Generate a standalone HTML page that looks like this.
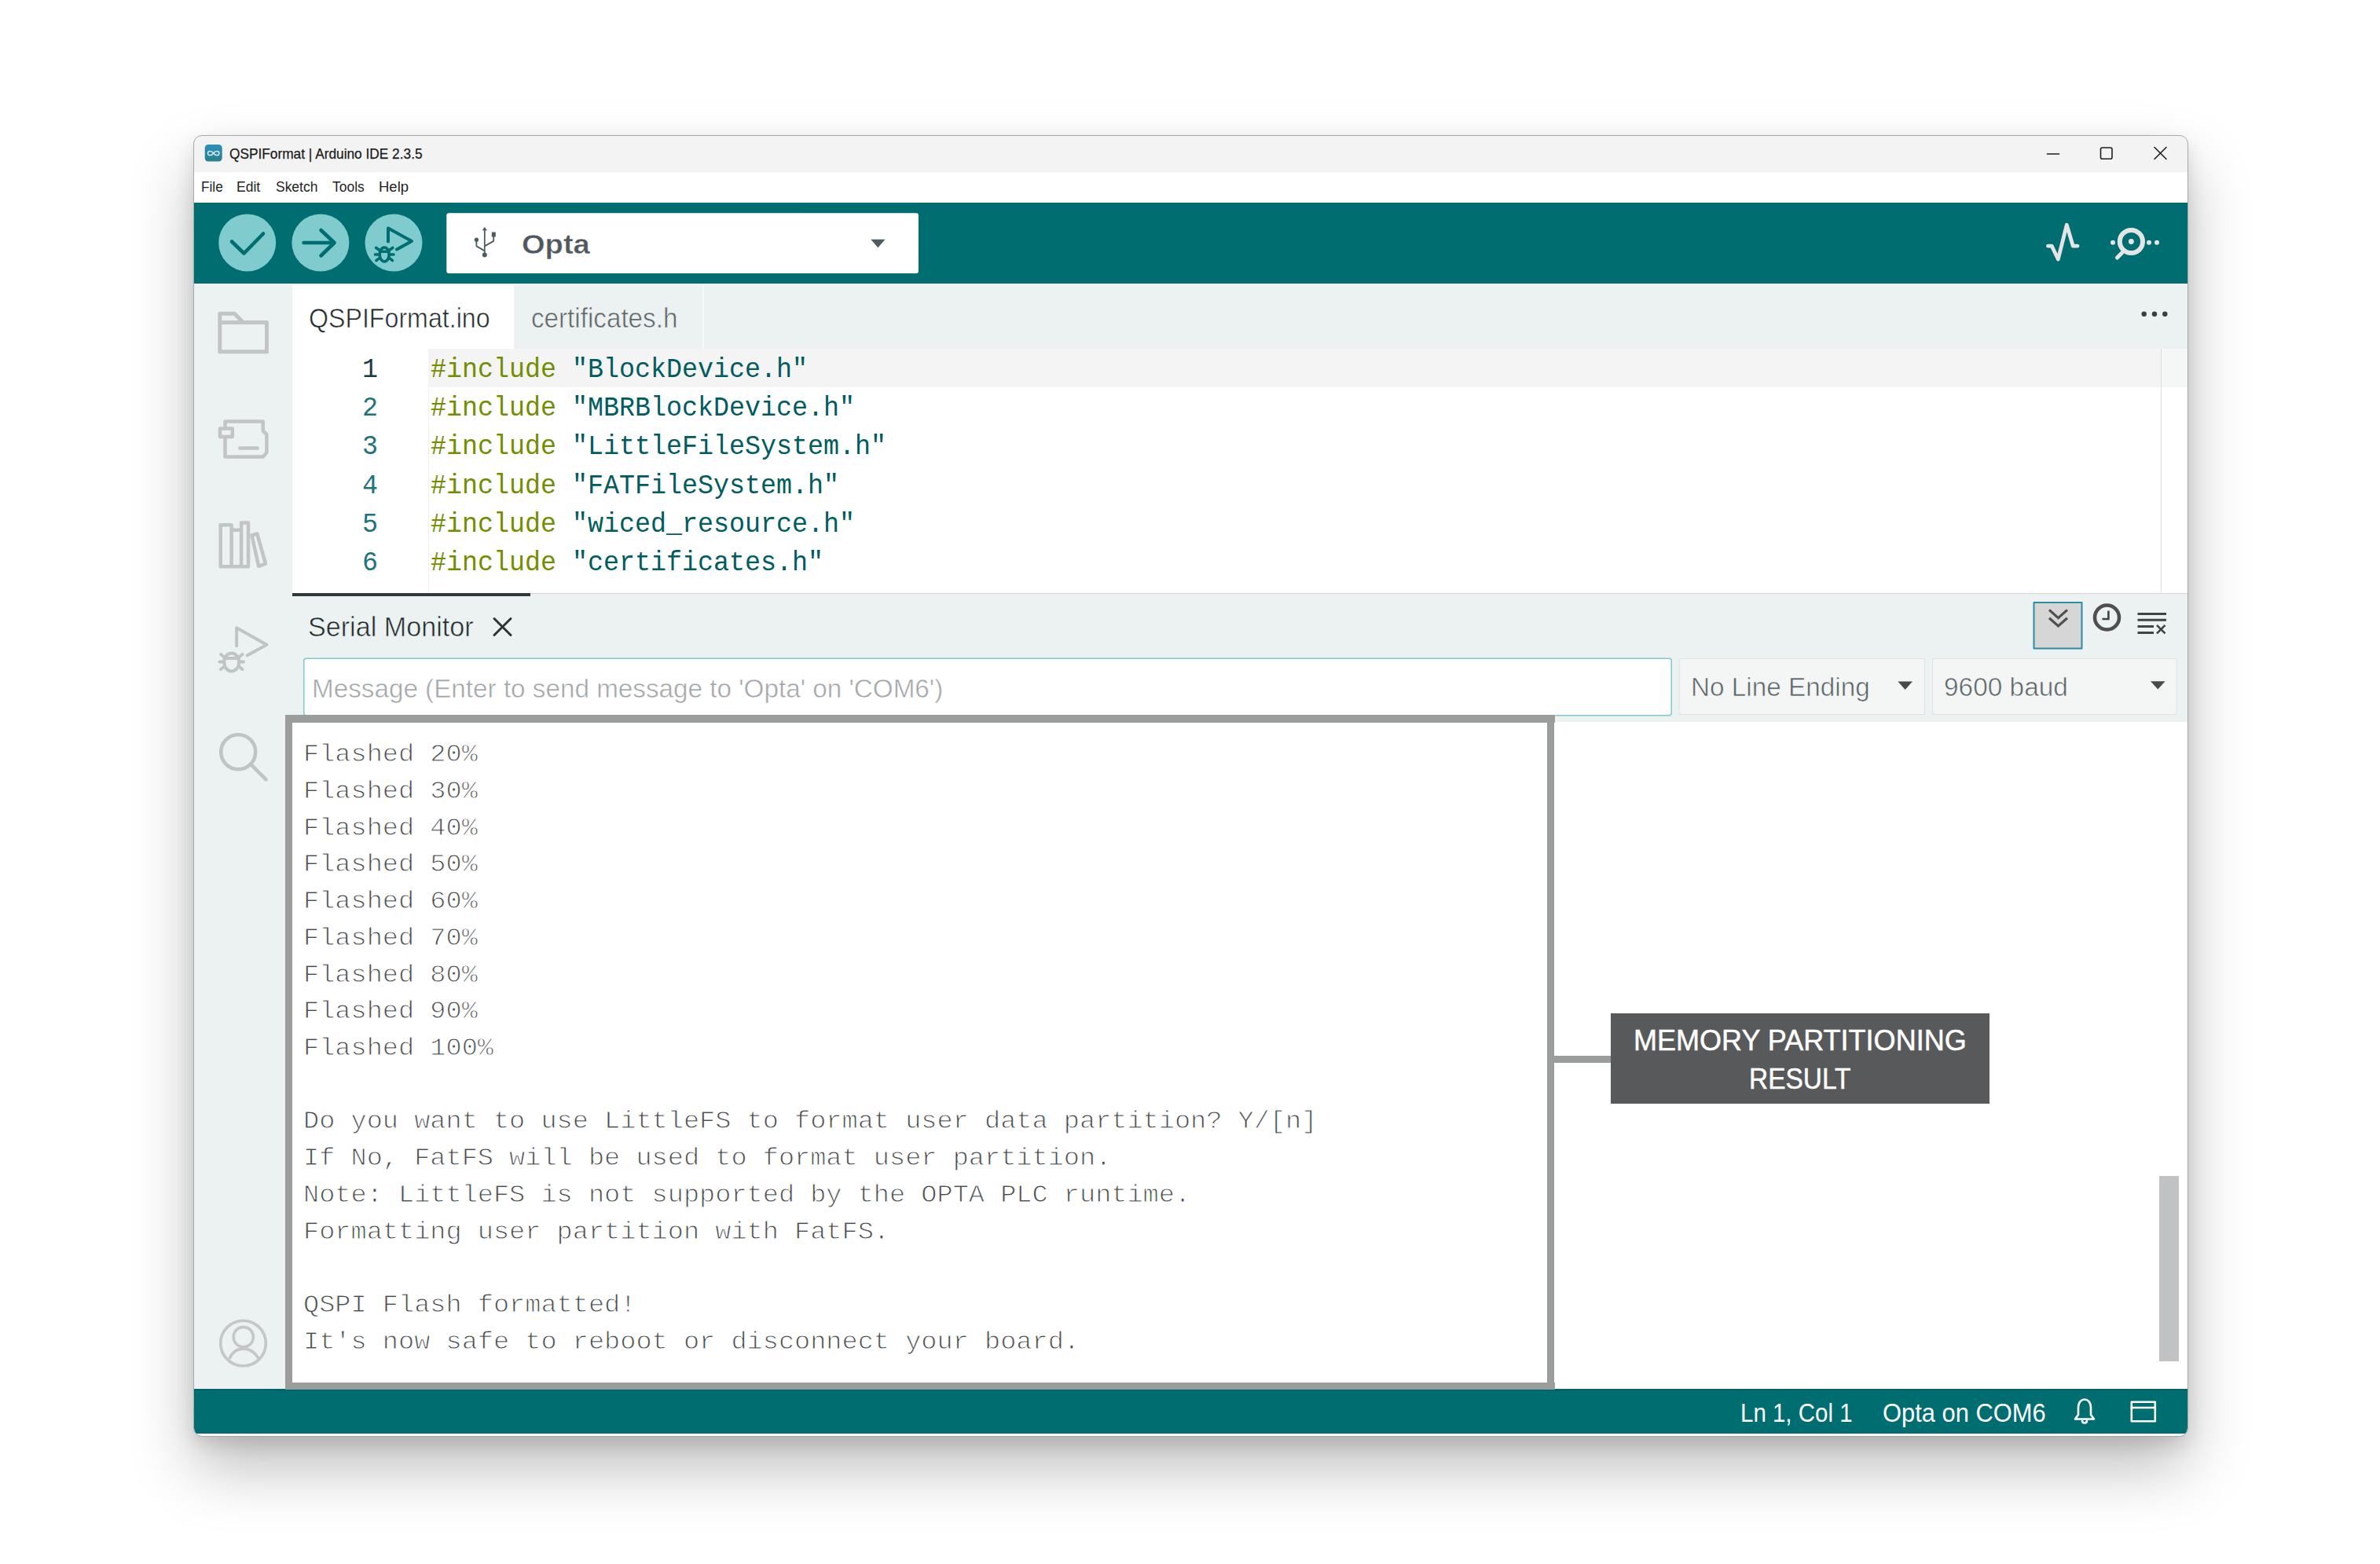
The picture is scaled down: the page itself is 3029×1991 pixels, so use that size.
<!DOCTYPE html>
<html><head><meta charset="utf-8">
<style>
html,body{margin:0;padding:0;}
body{width:3029px;height:1991px;background:#fff;position:relative;overflow:hidden;font-family:"Liberation Sans",sans-serif;}
.a{position:absolute;}
.t{position:absolute;white-space:pre;transform-origin:0 0;}
.mono{font-family:"Liberation Mono",monospace;}
#shadow{position:absolute;left:247px;top:173px;width:2537px;height:1655px;border-radius:10px;box-shadow:0 40px 80px rgba(0,0,0,0.26),0 10px 24px rgba(0,0,0,0.12);}
#win{position:absolute;left:247px;top:173px;width:2537px;height:1655px;border-radius:10px;overflow:hidden;background:#fff;}
#in{position:absolute;left:-247px;top:-173px;width:3029px;height:1991px;}
#frame{position:absolute;left:246px;top:172px;width:2537px;height:1655px;border:1px solid #a9a9a9;border-radius:11px;}
#ic{position:absolute;left:0;top:0;width:3029px;height:1991px;}
</style></head>
<body>
<div id="shadow"></div>
<div id="win"><div id="in">
<div class="a" style="left:247.00px;top:173.00px;width:2537.00px;height:46.00px;background:#f3f3f3;"></div>
<div class="a" style="left:247.00px;top:219.00px;width:2537.00px;height:39.00px;background:#ffffff;"></div>
<div class="a" style="left:247.00px;top:258.00px;width:2537.00px;height:103.00px;background:#006d70;"></div>
<div class="a" style="left:247.00px;top:361.00px;width:2537.00px;height:2.00px;background:#ffffff;"></div>
<div class="a" style="left:247.00px;top:363.00px;width:125.00px;height:1405.00px;background:#ecf1f1;"></div>
<div class="a" style="left:372.00px;top:363.00px;width:2412.00px;height:81.00px;background:#ecf1f1;"></div>
<div class="a" style="left:372.00px;top:363.00px;width:282.00px;height:81.00px;background:#ffffff;"></div>
<div class="a" style="left:894.00px;top:363.00px;width:1.50px;height:81.00px;background:#f6f7f7;"></div>
<div class="a" style="left:372.00px;top:444.00px;width:2412.00px;height:311.00px;background:#ffffff;"></div>
<div class="a" style="left:545.00px;top:444.00px;width:2205.00px;height:49.00px;background:#f4f4f4;"></div>
<div class="a" style="left:545.00px;top:493.00px;width:1.00px;height:262.00px;background:#f0f0f0;"></div>
<div class="a" style="left:2750.00px;top:444.00px;width:1.00px;height:311.00px;background:#d9dcdc;"></div>
<div class="a" style="left:2751.00px;top:444.00px;width:33.00px;height:49.00px;background:#f5f6f6;"></div>
<div class="a" style="left:372.00px;top:755.00px;width:2412.00px;height:164.00px;background:#ecf1f1;"></div>
<div class="a" style="left:372.00px;top:755.00px;width:2412.00px;height:1.00px;background:#d3d6d6;"></div>
<div class="a" style="left:372.00px;top:755.00px;width:303.00px;height:4.00px;background:#2c3a3d;"></div>
<div class="a" style="left:372.00px;top:919.00px;width:2412.00px;height:849.00px;background:#ffffff;"></div>
<div class="a" style="left:247.00px;top:1768.00px;width:2537.00px;height:57.00px;background:#006d70;"></div>
<div class="a" style="left:247.00px;top:1825.00px;width:2537.00px;height:3.00px;background:#ffffff;"></div>
<svg id="ic" viewBox="0 0 3029 1991" fill="none" stroke-linecap="round" stroke-linejoin="round">
<!-- title icon -->
<defs><linearGradient id="lg" x1="0" y1="0" x2="0" y2="1"><stop offset="0" stop-color="#2d90bd"/><stop offset="1" stop-color="#297f89"/></linearGradient></defs>
<rect x="260.7" y="184" width="22" height="21.6" rx="4.5" fill="url(#lg)"/>
<path d="M271.7,195 C269.5,191.5 264.5,191.5 264.5,195 C264.5,198.5 269.5,198.5 271.7,195 C273.9,191.5 278.9,191.5 278.9,195 C278.9,198.5 273.9,198.5 271.7,195 Z" stroke="#cde8ee" stroke-width="1.5"/>
<!-- window buttons -->
<path d="M2605.5,196 H2620.5" stroke="#1f1f1f" stroke-width="1.6"/>
<rect x="2673.5" y="188" width="14.5" height="14.2" rx="2" stroke="#1f1f1f" stroke-width="1.6"/>
<path d="M2742,187.5 L2757,202.5 M2757,187.5 L2742,202.5" stroke="#1f1f1f" stroke-width="1.6"/>
<!-- toolbar buttons -->
<circle cx="314.7" cy="309" r="36.5" fill="#7fcbcd"/>
<circle cx="407.9" cy="309" r="36.5" fill="#7fcbcd"/>
<circle cx="501" cy="309" r="36.5" fill="#7fcbcd"/>
<path d="M295,307.5 L310.5,322.5 L335,297.5" stroke="#006d70" stroke-width="4.6"/>
<path d="M386.5,309 H425.5 M408.5,293 L425.5,309 L408.5,325.5" stroke="#006d70" stroke-width="4.6"/>
<path d="M494,307.5 V290.5 L524,307 L505,317.5" stroke="#006d70" stroke-width="4"/>
<g stroke="#006d70" stroke-width="3.6">
<ellipse cx="489.2" cy="324" rx="6" ry="9"/>
<path d="M483.5,320.2 H494.9 M478.6,315.5 L483.4,318.8 M499.8,315.5 L495,318.8 M477.5,324 H483 M501,324 H495.4 M478.9,331.6 L483.2,328.4 M499.5,331.6 L495.2,328.4"/>
</g>
<!-- board selector -->
<rect x="568.3" y="271.2" width="600.7" height="76.8" rx="3" fill="#ffffff"/>
<g stroke="#4e5b61" stroke-width="1.8" fill="none">
<path d="M616.8,292 V324.6 M616.8,319.4 L606.4,313.4 V305.6 M616.8,313.4 L628.2,306.9 V301"/>
</g>
<path d="M613.6,293.2 L616.8,289 L620,293.2 Z" fill="#4e5b61"/>
<circle cx="606.4" cy="305.2" r="2.6" fill="#4e5b61"/>
<rect x="625.8" y="295.5" width="5" height="6" fill="#4e5b61"/>
<circle cx="616.8" cy="324.6" r="3" fill="#4e5b61"/>
<path d="M1108.3,304.8 H1126.5 L1117.4,315.2 Z" fill="#4e5b61"/>
<!-- right toolbar icons -->
<path d="M2606.5,313.2 H2611.3 L2619.3,330 L2630.3,286.3 L2638.3,313.2 H2644" stroke="#e4e6e6" stroke-width="4.8"/>
<circle cx="2712.4" cy="307.5" r="14.6" stroke="#e4e6e6" stroke-width="6"/>
<circle cx="2712.4" cy="307.5" r="3.4" fill="#e4e6e6"/>
<path d="M2700.5,322 L2694.5,328" stroke="#e4e6e6" stroke-width="5"/>
<circle cx="2689" cy="308.8" r="3" fill="#e4e6e6"/>
<circle cx="2735" cy="308.8" r="3" fill="#e4e6e6"/>
<circle cx="2745" cy="308.8" r="3" fill="#e4e6e6"/>
<!-- sidebar icons -->
<g stroke="#c2c4c5" stroke-width="5" stroke-linejoin="round" stroke-linecap="round">
<path d="M279.8,399.3 H298.5 L309.5,410.5 H339.5 V447.8 H279.8 Z M279.8,410.5 H309.5"/>
</g>
<g stroke="#c2c4c5" stroke-width="4.5" stroke-linejoin="round" stroke-linecap="round">
<path d="M286.5,536.4 H334.7 V548.5 L339.4,553 V576 L335,581.4 H286.5 Z"/>
<rect x="280" y="545.6" width="15.8" height="10.4" fill="#ecf1f1"/>
<path d="M305.3,570.4 H327.6"/>
<path d="M280.7,668.3 H294.6 V721.2 H280.7 Z M294.6,674.7 H307.1 V721.2 H294.6 Z M307.1,665.5 H316 V721.2 H307.1 Z M320.5,681.5 L327.2,679.3 L338,717.6 L329.2,720.8 Z"/>
</g>
<g stroke="#c1c4c5" stroke-width="4" >
<path d="M301.1,822.3 V799.2 L339.5,820.7 L314.7,834.3"/>
<ellipse cx="294.7" cy="843" rx="9.5" ry="11.5"/>
<path d="M285.5,838 H304 M281,833 L286,837 M308.5,833 L303.5,837 M279.5,842.5 H285 M310,842.5 H304.5 M281,852 L286,848 M308.5,852 L303.5,848"/>
</g>
<g stroke="#c1c4c5" stroke-width="4.6">
<circle cx="303.2" cy="957.3" r="22"/>
<path d="M320.3,974.1 L338.5,992.3"/>
</g>
<g stroke="#c4c6c7" stroke-width="3.6">
<circle cx="309.5" cy="1710" r="28.8"/>
<circle cx="309.8" cy="1702" r="12.6"/>
<path d="M292.5,1728.5 C300,1713 319,1713 328.5,1728.5"/>
</g>
<!-- tab dots -->
<circle cx="2728.7" cy="399.8" r="3.2" fill="#3d3d3d"/>
<circle cx="2742" cy="399.8" r="3.2" fill="#3d3d3d"/>
<circle cx="2755.3" cy="399.8" r="3.2" fill="#3d3d3d"/>
<!-- serial monitor close -->
<path d="M629,787.5 L650,808.5 M650,787.5 L629,808.5" stroke="#2b3436" stroke-width="3"/>
<!-- scroll to bottom button -->
<rect x="2588.5" y="767" width="61" height="58.5" fill="#d6d6d6" stroke="#2a8da3" stroke-width="2"/>
<path d="M2608,776.4 L2619.5,786.7 L2631,776.4 M2608,786.7 L2619.5,796.9 L2631,786.7" stroke="#4f4f4f" stroke-width="3.2" stroke-linecap="butt" stroke-linejoin="miter"/>
<!-- clock -->
<circle cx="2681.5" cy="786" r="15.5" stroke="#4f4f4f" stroke-width="4.5"/>
<path d="M2683.4,777.5 V788 H2675.5" stroke="#3d4446" stroke-width="2.6" stroke-linecap="butt" stroke-linejoin="miter"/>
<!-- clear -->
<path d="M2720.5,781.6 H2757 M2720.5,789.2 H2757 M2720.5,797.5 H2741 M2720.5,805.5 H2741" stroke="#3d4446" stroke-width="3" stroke-linecap="butt"/>
<path d="M2745,795.8 L2755.5,806.3 M2755.5,795.8 L2745,806.3" stroke="#3d4446" stroke-width="2.6" stroke-linecap="butt"/>
<!-- inputs -->
<rect x="386.75" y="838.25" width="1740.5" height="72.5" rx="3" fill="#ffffff" stroke="#80c9cc" stroke-width="1.5"/>
<rect x="2137.5" y="838.5" width="312" height="71" fill="#f4f6f6" stroke="#dfe3e3" stroke-width="1"/>
<rect x="2460" y="838.5" width="310" height="71" fill="#f4f6f6" stroke="#dfe3e3" stroke-width="1"/>
<path d="M2415.4,867.6 H2434 L2424.7,877.9 Z" fill="#474b4c"/>
<path d="M2737,867.2 H2755.6 L2746.3,877.5 Z" fill="#474b4c"/>
<!-- status bar icons -->
<g stroke="#ffffff" stroke-width="2.6">
<path d="M2641,1806.5 H2665 L2661,1801 V1792 C2661,1785 2657,1781.5 2653,1781.5 C2649,1781.5 2645,1785 2645,1792 V1801 Z"/>
<path d="M2650,1808.5 C2650,1812.5 2656,1812.5 2656,1808.5"/>
<rect x="2712.8" y="1784.8" width="30" height="24.5"/>
<path d="M2712.8,1792 H2742.8"/>
</g>
</svg>

<div class="t" style="left:292.22px;top:184.90px;font-family:'Liberation Sans',sans-serif;font-weight:400;font-size:18.40px;line-height:21px;color:#1a1a1a;transform:scaleX(0.9396);-webkit-text-stroke:0.25px #1a1a1a;">QSPIFormat | Arduino IDE 2.3.5</div>
<div class="t" style="left:256.22px;top:227.00px;font-family:'Liberation Sans',sans-serif;font-weight:400;font-size:18.90px;line-height:21px;color:#1f1f1f;transform:scaleX(0.9121);">File</div>
<div class="t" style="left:301.40px;top:227.00px;font-family:'Liberation Sans',sans-serif;font-weight:400;font-size:18.90px;line-height:21px;color:#1f1f1f;transform:scaleX(0.9255);">Edit</div>
<div class="t" style="left:350.81px;top:227.00px;font-family:'Liberation Sans',sans-serif;font-weight:400;font-size:18.90px;line-height:21px;color:#1f1f1f;transform:scaleX(0.9235);">Sketch</div>
<div class="t" style="left:422.85px;top:227.00px;font-family:'Liberation Sans',sans-serif;font-weight:400;font-size:18.90px;line-height:21px;color:#1f1f1f;transform:scaleX(0.9236);">Tools</div>
<div class="t" style="left:482.32px;top:227.00px;font-family:'Liberation Sans',sans-serif;font-weight:400;font-size:18.90px;line-height:21px;color:#1f1f1f;transform:scaleX(0.9789);">Help</div>
<div class="t" style="left:663.98px;top:291.30px;font-family:'Liberation Sans',sans-serif;font-weight:700;font-size:35.80px;line-height:40px;color:#4f585c;transform:scaleX(1.0638);-webkit-text-stroke:0.4px #fff;">Opta</div>
<div class="t" style="left:392.55px;top:385.80px;font-family:'Liberation Sans',sans-serif;font-weight:400;font-size:34.60px;line-height:38px;color:#1f2a2b;transform:scaleX(0.9301);-webkit-text-stroke:0.6px #fff;">QSPIFormat.ino</div>
<div class="t" style="left:676.47px;top:385.80px;font-family:'Liberation Sans',sans-serif;font-weight:400;font-size:34.60px;line-height:38px;color:#5d6567;transform:scaleX(0.9602);-webkit-text-stroke:0.6px #ecf1f1;">certificates.h</div>
<div class="t" style="left:392.06px;top:778.60px;font-family:'Liberation Sans',sans-serif;font-weight:400;font-size:34.30px;line-height:38px;color:#1f2a2b;transform:scaleX(0.9952);-webkit-text-stroke:0.6px #ecf1f1;">Serial Monitor</div>
<div class="t" style="left:396.84px;top:857.00px;font-family:'Liberation Sans',sans-serif;font-weight:400;font-size:34.00px;line-height:38px;color:#a3a7a9;transform:scaleX(0.9777);-webkit-text-stroke:0.5px #fff;">Message (Enter to send message to &#x27;Opta&#x27; on &#x27;COM6&#x27;)</div>
<div class="t" style="left:2151.64px;top:855.50px;font-family:'Liberation Sans',sans-serif;font-weight:400;font-size:33.30px;line-height:37px;color:#5b6466;transform:scaleX(1.0001);-webkit-text-stroke:0.6px #f4f6f6;">No Line Ending</div>
<div class="t" style="left:2474.00px;top:855.80px;font-family:'Liberation Sans',sans-serif;font-weight:400;font-size:33.30px;line-height:37px;color:#5b6466;transform:scaleX(1.0034);-webkit-text-stroke:0.6px #f4f6f6;">9600 baud</div>
<div class="t" style="left:2214.64px;top:1781.30px;font-family:'Liberation Sans',sans-serif;font-weight:400;font-size:32.30px;line-height:36px;color:#ffffff;transform:scaleX(0.9124);">Ln 1, Col 1</div>
<div class="t" style="left:2396.11px;top:1781.30px;font-family:'Liberation Sans',sans-serif;font-weight:400;font-size:32.30px;line-height:36px;color:#ffffff;transform:scaleX(0.9558);">Opta on COM6</div>
<div class="t mono" style="left:548.2px;top:452.30px;font-size:35.00px;line-height:39px;transform:scaleX(0.9524);"><span style="color:#728e00">#include</span> <span style="color:#005c5f">&quot;BlockDevice.h&quot;</span></div>
<div class="t mono" style="left:460.70px;top:452.30px;font-size:35.00px;line-height:39px;transform:scaleX(0.9524);color:#1b3c3f">1</div>
<div class="t mono" style="left:548.2px;top:501.38px;font-size:35.00px;line-height:39px;transform:scaleX(0.9524);"><span style="color:#728e00">#include</span> <span style="color:#005c5f">&quot;MBRBlockDevice.h&quot;</span></div>
<div class="t mono" style="left:460.70px;top:501.38px;font-size:35.00px;line-height:39px;transform:scaleX(0.9524);color:#22727a">2</div>
<div class="t mono" style="left:548.2px;top:550.46px;font-size:35.00px;line-height:39px;transform:scaleX(0.9524);"><span style="color:#728e00">#include</span> <span style="color:#005c5f">&quot;LittleFileSystem.h&quot;</span></div>
<div class="t mono" style="left:460.70px;top:550.46px;font-size:35.00px;line-height:39px;transform:scaleX(0.9524);color:#22727a">3</div>
<div class="t mono" style="left:548.2px;top:599.54px;font-size:35.00px;line-height:39px;transform:scaleX(0.9524);"><span style="color:#728e00">#include</span> <span style="color:#005c5f">&quot;FATFileSystem.h&quot;</span></div>
<div class="t mono" style="left:460.70px;top:599.54px;font-size:35.00px;line-height:39px;transform:scaleX(0.9524);color:#22727a">4</div>
<div class="t mono" style="left:548.2px;top:648.62px;font-size:35.00px;line-height:39px;transform:scaleX(0.9524);"><span style="color:#728e00">#include</span> <span style="color:#005c5f">&quot;wiced_resource.h&quot;</span></div>
<div class="t mono" style="left:460.70px;top:648.62px;font-size:35.00px;line-height:39px;transform:scaleX(0.9524);color:#22727a">5</div>
<div class="t mono" style="left:548.2px;top:697.70px;font-size:35.00px;line-height:39px;transform:scaleX(0.9524);"><span style="color:#728e00">#include</span> <span style="color:#005c5f">&quot;certificates.h&quot;</span></div>
<div class="t mono" style="left:460.70px;top:697.70px;font-size:35.00px;line-height:39px;transform:scaleX(0.9524);color:#22727a">6</div>
<div class="t mono" style="left:386px;top:944.20px;font-size:30.50px;line-height:34px;color:#484b4d;-webkit-text-stroke:0.9px #fff;transform:scaleX(1.1016)">Flashed 20%</div>
<div class="t mono" style="left:386px;top:990.92px;font-size:30.50px;line-height:34px;color:#484b4d;-webkit-text-stroke:0.9px #fff;transform:scaleX(1.1016)">Flashed 30%</div>
<div class="t mono" style="left:386px;top:1037.64px;font-size:30.50px;line-height:34px;color:#484b4d;-webkit-text-stroke:0.9px #fff;transform:scaleX(1.1016)">Flashed 40%</div>
<div class="t mono" style="left:386px;top:1084.36px;font-size:30.50px;line-height:34px;color:#484b4d;-webkit-text-stroke:0.9px #fff;transform:scaleX(1.1016)">Flashed 50%</div>
<div class="t mono" style="left:386px;top:1131.08px;font-size:30.50px;line-height:34px;color:#484b4d;-webkit-text-stroke:0.9px #fff;transform:scaleX(1.1016)">Flashed 60%</div>
<div class="t mono" style="left:386px;top:1177.80px;font-size:30.50px;line-height:34px;color:#484b4d;-webkit-text-stroke:0.9px #fff;transform:scaleX(1.1016)">Flashed 70%</div>
<div class="t mono" style="left:386px;top:1224.52px;font-size:30.50px;line-height:34px;color:#484b4d;-webkit-text-stroke:0.9px #fff;transform:scaleX(1.1016)">Flashed 80%</div>
<div class="t mono" style="left:386px;top:1271.24px;font-size:30.50px;line-height:34px;color:#484b4d;-webkit-text-stroke:0.9px #fff;transform:scaleX(1.1016)">Flashed 90%</div>
<div class="t mono" style="left:386px;top:1317.96px;font-size:30.50px;line-height:34px;color:#484b4d;-webkit-text-stroke:0.9px #fff;transform:scaleX(1.1016)">Flashed 100%</div>
<div class="t mono" style="left:386px;top:1411.40px;font-size:30.50px;line-height:34px;color:#484b4d;-webkit-text-stroke:0.9px #fff;transform:scaleX(1.1016)">Do you want to use LittleFS to format user data partition? Y/[n]</div>
<div class="t mono" style="left:386px;top:1458.12px;font-size:30.50px;line-height:34px;color:#484b4d;-webkit-text-stroke:0.9px #fff;transform:scaleX(1.1016)">If No, FatFS will be used to format user partition.</div>
<div class="t mono" style="left:386px;top:1504.84px;font-size:30.50px;line-height:34px;color:#484b4d;-webkit-text-stroke:0.9px #fff;transform:scaleX(1.1016)">Note: LittleFS is not supported by the OPTA PLC runtime.</div>
<div class="t mono" style="left:386px;top:1551.56px;font-size:30.50px;line-height:34px;color:#484b4d;-webkit-text-stroke:0.9px #fff;transform:scaleX(1.1016)">Formatting user partition with FatFS.</div>
<div class="t mono" style="left:386px;top:1645.00px;font-size:30.50px;line-height:34px;color:#484b4d;-webkit-text-stroke:0.9px #fff;transform:scaleX(1.1016)">QSPI Flash formatted!</div>
<div class="t mono" style="left:386px;top:1691.72px;font-size:30.50px;line-height:34px;color:#484b4d;-webkit-text-stroke:0.9px #fff;transform:scaleX(1.1016)">It&#x27;s now safe to reboot or disconnect your board.</div>
<div class="a" style="left:363.00px;top:910.00px;width:1615.50px;height:9.50px;background:#9b9d9c;"></div>
<div class="a" style="left:363.00px;top:1760.00px;width:1615.50px;height:8.50px;background:#9b9d9c;"></div>
<div class="a" style="left:247.00px;top:1768.50px;width:2537.00px;height:1.50px;background:#005a5d;"></div>
<div class="a" style="left:363.00px;top:910.00px;width:9.00px;height:858.00px;background:#9b9d9c;"></div>
<div class="a" style="left:1969.30px;top:910.00px;width:9.20px;height:858.00px;background:#9b9d9c;"></div>
<div class="a" style="left:1978.00px;top:1343.70px;width:73.00px;height:9.20px;background:#9b9d9c;"></div>
<div class="a" style="left:2050.30px;top:1290.00px;width:481.40px;height:115.00px;background:#58595b;"></div>
<div class="t" style="left:2079.12px;top:1302.50px;font-family:'Liberation Sans',sans-serif;font-weight:400;font-size:37.20px;line-height:42px;color:#ffffff;transform:scaleX(0.9688);-webkit-text-stroke:0.5px #fff;">MEMORY PARTITIONING</div>
<div class="t" style="left:2225.92px;top:1352.40px;font-family:'Liberation Sans',sans-serif;font-weight:400;font-size:37.20px;line-height:42px;color:#ffffff;transform:scaleX(0.8999);-webkit-text-stroke:0.5px #fff;">RESULT</div>
<div class="a" style="left:2748.00px;top:1497.00px;width:25.40px;height:236.00px;background:#c1c2c3;"></div>
</div></div>
<div id="frame"></div>
</body></html>
